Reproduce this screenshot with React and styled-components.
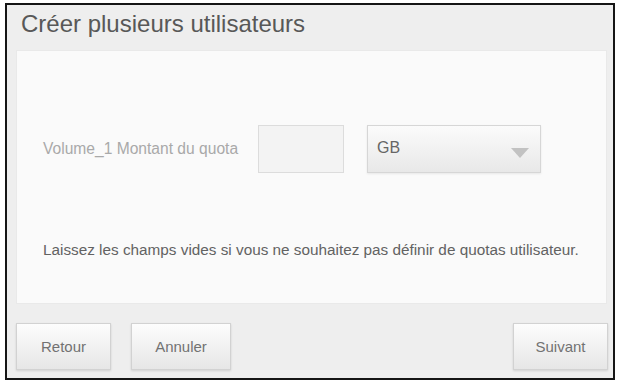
import { createGlobalStyle, styled } from "styled-components";

const GlobalStyle = createGlobalStyle`
  html, body {
    margin: 0;
    padding: 0;
    background: #ffffff;
  }
  body {
    font-family: "Liberation Sans", Arial, sans-serif;
  }
`;

export default function App() {
  return (
    <>
      <GlobalStyle />
      <Dialog>
        <Header>
          <Title>Créer plusieurs utilisateurs</Title>
        </Header>
        <Panel>
          <QuotaRow>
            <Label>Volume_1 Montant du quota</Label>
            <QuotaInput type="text" />
            <Select>
              <span>GB</span>
              <Arrow />
            </Select>
          </QuotaRow>
          <Hint>
            Laissez les champs vides si vous ne souhaitez pas définir de quotas
            utilisateur.
          </Hint>
        </Panel>
        <Footer>
          <Button $width={95}>Retour</Button>
          <Button $width={100}>Annuler</Button>
          <Spacer />
          <Button $width={95}>Suivant</Button>
        </Footer>
      </Dialog>
    </>
  );
}

const Dialog = styled.div`
  box-sizing: border-box;
  margin: 3px 0 0 5px;
  width: 610px;
  height: 377px;
  border: 2px solid #151515;
  background: #eeeeee;
  display: flex;
  flex-direction: column;
`;

const Header = styled.header`
  box-sizing: border-box;
  height: 45px;
  padding: 5px 0 0 14px;
`;

const Title = styled.h1`
  margin: 0;
  font-size: 24px;
  line-height: 28px;
  font-weight: normal;
  color: #585858;
`;

const Panel = styled.section`
  box-sizing: border-box;
  margin: 0 6px 0 9px;
  height: 254px;
  padding: 74px 26px 0 26px;
  background: #fafafa;
  border: 1px solid #e9e9e9;
  display: flex;
  flex-direction: column;
`;

const QuotaRow = styled.div`
  display: flex;
  align-items: center;
  height: 48px;
`;

const Label = styled.span`
  font-size: 15.6px;
  color: #a9a9a9;
  margin-right: 20px;
`;

const QuotaInput = styled.input`
  box-sizing: border-box;
  width: 86px;
  height: 48px;
  margin: 0 23px 0 0;
  border: 1px solid #dcdcdc;
  background: #f3f3f3;
  outline: none;
`;

const Select = styled.div`
  box-sizing: border-box;
  width: 174px;
  height: 48px;
  padding: 0 11px 3px 9px;
  display: flex;
  align-items: center;
  justify-content: space-between;
  border: 1px solid #d6d6d6;
  background: linear-gradient(#fbfbfb, #e8e8e8);
  box-shadow: 0 1px 2px rgba(0, 0, 0, 0.08);
  font-size: 16px;
  color: #666666;
`;

const Arrow = styled.span`
  width: 0;
  height: 0;
  margin-top: 10px;
  border-left: 9px solid transparent;
  border-right: 9px solid transparent;
  border-top: 10px solid #c2c2c2;
`;

const Hint = styled.p`
  margin: 68px 0 0 0;
  font-size: 15.3px;
  line-height: 18px;
  color: #626262;
`;

const Footer = styled.footer`
  display: flex;
  gap: 20px;
  padding: 19px 5px 0 9px;
`;

const Spacer = styled.div`
  flex: 1;
`;

const Button = styled.button`
  box-sizing: border-box;
  width: ${(props) => props.$width}px;
  height: 47px;
  border: 1px solid #d2d2d2;
  background: linear-gradient(#fdfdfd, #e6e6e6);
  box-shadow: 0 1px 2px rgba(0, 0, 0, 0.12);
  font-family: "Liberation Sans", Arial, sans-serif;
  font-size: 15px;
  color: #727272;
  padding: 0;
  cursor: pointer;
`;
